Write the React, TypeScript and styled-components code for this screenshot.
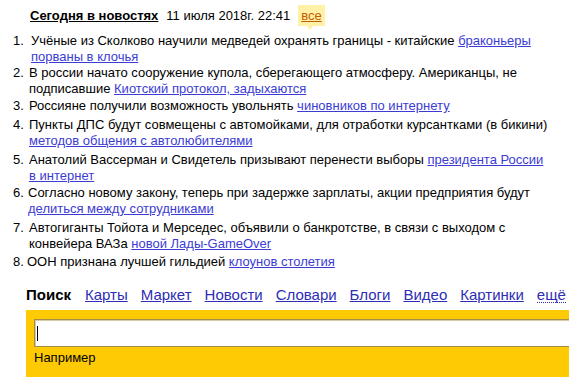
import React from 'react'
import styled, { createGlobalStyle } from 'styled-components';

const GlobalStyle = createGlobalStyle`
  body {
    margin: 0;
    background: #fff;
    font-family: "Liberation Sans", Arial, sans-serif;
    font-size: 13px;
    color: #000;
    overflow: hidden;
  }
`;

interface ItemProps {
  indent: number;
  gap: number;
}

const Page = styled.div`
  width: 569px;
  line-height: 16px;
`;

const Header = styled.div`
  display: flex;
  align-items: flex-start;
  gap: 8px;
  padding: 8px 0 0 30px;
  white-space: nowrap;

  & > .title {
    font-weight: 700;
    color: #000;
    text-decoration: underline;
  }
`;

const AllLink = styled.a`
  position: relative;
  margin-top: -3px;
  padding: 3px 3px 2px;
  background: #fff1a6;
  color: #c45c00;
  text-decoration: underline;

  &::after {
    content: "";
    position: absolute;
    left: 9px;
    bottom: -4px;
    border-left: 3px solid transparent;
    border-right: 3px solid transparent;
    border-top: 4px solid #fff1a6;
  }
`;

const List = styled.ol`
  margin: 7px 0 0;
  padding: 0;
  list-style: none;
`;

const Item = styled.li<ItemProps>`
  display: grid;
  grid-template-columns: ${({ indent }) => indent}px 1fr;
  margin-top: ${({ gap }) => gap}px;
  white-space: nowrap;

  & > .num {
    padding-left: 13px;
  }
`;

const TextLink = styled.a`
  color: #3c3cd4;
  text-decoration: underline;
`;

const Nav = styled.nav`
  display: flex;
  align-items: baseline;
  gap: 13px;
  height: 16px;
  margin-top: 17px;
  padding-left: 26px;
  font-size: 15px;
  white-space: nowrap;

  & > b {
    color: #000;
    margin-right: 1px;
  }
`;

const NavLink = styled.a`
  color: #2d2db6;
  text-decoration: underline;
`;

const MoreLink = styled.a`
  color: #2d2db6;
  text-decoration: none;
  border-bottom: 1px dotted #2d2db6;
  line-height: 15px;
`;

const SearchBand = styled.div`
  margin: 7px 0 0 26px;
  height: 68px;
  padding: 9px 0 0 8px;
  box-sizing: border-box;
  background: #fdca04;
  overflow: hidden;
`;

const SearchBox = styled.div`
  width: 560px;
  height: 28px;
  box-sizing: border-box;
  border: 1px solid #a38c48;
  box-shadow: inset 1px 1px 0 #d6cba4;
  background: #fff;
  display: flex;
  align-items: center;
  padding-left: 2px;
`;

const Caret = styled.span`
  width: 1px;
  height: 15px;
  background: #000;
`;

const Hint = styled.div`
  margin-top: 3px;
  color: #000;
`;

const news: { indent: number; gap: number; body: React.ReactNode }[] = [
  {
    indent: 31, gap: 0,
    body: <>Учёные из Сколково научили медведей охранять границы - китайские <TextLink href="#">браконьеры<br />порваны в клочья</TextLink></>,
  },
  {
    indent: 29, gap: 0,
    body: <>В россии начато сооружение купола, сберегающего атмосферу. Американцы, не<br />подписавшие <TextLink href="#">Киотский протокол, задыхаются</TextLink></>,
  },
  {
    indent: 29, gap: 1,
    body: <>Россияне получили возможность увольнять <TextLink href="#">чиновников по интернету</TextLink></>,
  },
  {
    indent: 29, gap: 3,
    body: <>Пункты ДПС будут совмещены с автомойками, для отработки курсантками (в бикини)<br /><TextLink href="#">методов общения с автолюбителями</TextLink></>,
  },
  {
    indent: 29, gap: 3,
    body: <>Анатолий Вассерман и Свидетель призывают перенести выборы <TextLink href="#">президента России <br />в интернет</TextLink></>,
  },
  {
    indent: 28, gap: 1,
    body: <>Согласно новому закону, теперь при задержке зарплаты, акции предприятия будут<br /><TextLink href="#">делиться между сотрудниками</TextLink></>,
  },
  {
    indent: 29, gap: 3,
    body: <>Автогиганты Тойота и Мерседес, объявили о банкротстве, в связи с выходом с<br />конвейера ВАЗа <TextLink href="#">новой Лады-GameOver</TextLink></>,
  },
  {
    indent: 27, gap: 2,
    body: <>ООН признана лучшей гильдией <TextLink href="#">клоунов столетия</TextLink></>,
  },
];

const services = ['Карты', 'Маркет', 'Новости', 'Словари', 'Блоги', 'Видео', 'Картинки'];

export default function App() {
  return (
    <Page>
      <GlobalStyle />
      <Header>
        <span className="title">Сегодня в новостях</span>
        <span>11 июля 2018г. 22:41</span>
        <AllLink href="#">все</AllLink>
      </Header>

      <List>
        {news.map((n, i) => (
          <Item key={i} indent={n.indent} gap={n.gap}>
            <span className="num">{i + 1}.</span>
            <span>{n.body}</span>
          </Item>
        ))}
      </List>

      <Nav>
        <b>Поиск</b>
        {services.map((s) => (
          <NavLink key={s} href="#">{s}</NavLink>
        ))}
        <MoreLink href="#">ещё</MoreLink>
      </Nav>

      <SearchBand>
        <SearchBox>
          <Caret />
        </SearchBox>
        <Hint>Например</Hint>
      </SearchBand>
    </Page>
  );
}
